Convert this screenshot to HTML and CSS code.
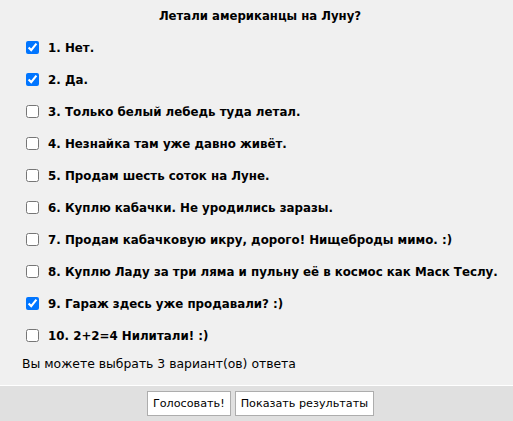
FILE: index.html
```html
<!DOCTYPE html>
<html lang="ru">
<head>
<meta charset="utf-8">
<title>Опрос</title>
<link rel="stylesheet" href="styles.css">
</head>
<body>
<div class="poll">
  <div class="poll-body">
    <div class="poll-title">Летали американцы на Луну?</div>
    <label class="option"><input type="checkbox" checked> 1. Нет.</label>
    <label class="option"><input type="checkbox" checked> 2. Да.</label>
    <label class="option"><input type="checkbox"> 3. Только белый лебедь туда летал.</label>
    <label class="option"><input type="checkbox"> 4. Незнайка там уже давно живёт.</label>
    <label class="option"><input type="checkbox"> 5. Продам шесть соток на Луне.</label>
    <label class="option"><input type="checkbox"> 6. Куплю кабачки. Не уродились заразы.</label>
    <label class="option"><input type="checkbox"> 7. Продам кабачковую икру, дорого! Нищеброды мимо. :)</label>
    <label class="option"><input type="checkbox"> 8. Куплю Ладу за три ляма и пульну её в космос как Маск Теслу.</label>
    <label class="option"><input type="checkbox" checked> 9. Гараж здесь уже продавали? :)</label>
    <label class="option"><input type="checkbox"> 10. 2+2=4 Нилитали! :)</label>
    <div class="poll-note">Вы можете выбрать 3 вариант(ов) ответа</div>
  </div>
  <div class="poll-footer">
    <button class="btn">Голосовать!</button>
    <button class="btn">Показать результаты</button>
  </div>
</div>
</body>
</html>
```

FILE: styles.css
```css
html, body {
  margin: 0;
  padding: 0;
  background: #f0f0f0;
}
body {
  font-family: "DejaVu Sans", Verdana, sans-serif;
  color: #000;
}
.poll-body {
  padding: 0 15px 0 22px;
  border-bottom: 1px solid #ffffff;
}
.poll-title {
  height: 31px;
  line-height: 31px;
  text-align: center;
  font-family: "DejaVu Sans Condensed", "DejaVu Sans", sans-serif;
  font-weight: bold;
  font-size: 13px;
}
.option {
  display: flex;
  align-items: center;
  height: 32px;
  font-family: "DejaVu Sans Condensed", "DejaVu Sans", sans-serif;
  font-weight: bold;
  font-size: 13.15px;
  white-space: pre;
}
.option input {
  width: 13px;
  height: 13px;
  margin: 0 5px 0 4px;
}
.poll-note {
  font-size: 12.4px;
  line-height: 16px;
  padding: 5px 0 13px;
}
.poll-footer {
  background: #e0e0e0;
  display: flex;
  justify-content: center;
  gap: 4px;
  padding: 5px 0 5px 8px;
  height: 25px;
}
.btn {
  font-family: "DejaVu Sans", Verdana, sans-serif;
  font-size: 11.2px;
  height: 25px;
  padding: 0 5px;
  background: #ffffff;
  border: 1px solid #adadad;
  border-radius: 0;
  color: #000;
}
```
